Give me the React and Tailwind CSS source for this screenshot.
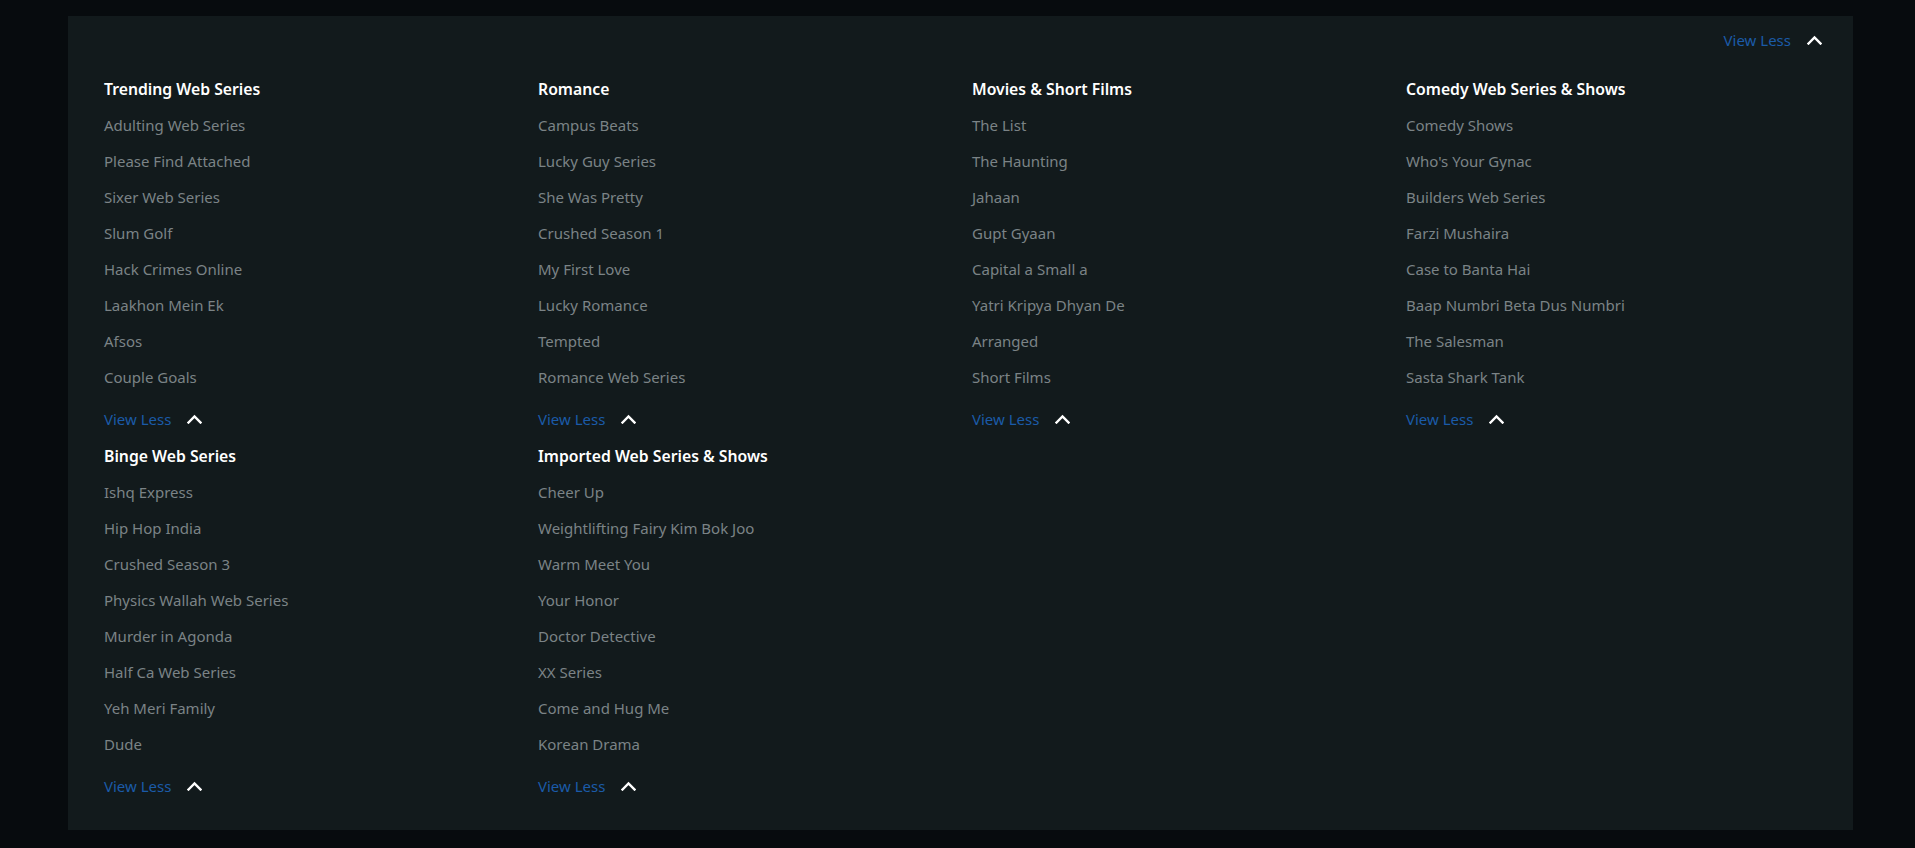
import React from "react";

const sections = [
  { title: "Trending Web Series", items: ["Adulting Web Series", "Please Find Attached", "Sixer Web Series", "Slum Golf", "Hack Crimes Online", "Laakhon Mein Ek", "Afsos", "Couple Goals"] },
  { title: "Romance", items: ["Campus Beats", "Lucky Guy Series", "She Was Pretty", "Crushed Season 1", "My First Love", "Lucky Romance", "Tempted", "Romance Web Series"] },
  { title: "Movies & Short Films", items: ["The List", "The Haunting", "Jahaan", "Gupt Gyaan", "Capital a Small a", "Yatri Kripya Dhyan De", "Arranged", "Short Films"] },
  { title: "Comedy Web Series & Shows", items: ["Comedy Shows", "Who's Your Gynac", "Builders Web Series", "Farzi Mushaira", "Case to Banta Hai", "Baap Numbri Beta Dus Numbri", "The Salesman", "Sasta Shark Tank"] },
  { title: "Binge Web Series", items: ["Ishq Express", "Hip Hop India", "Crushed Season 3", "Physics Wallah Web Series", "Murder in Agonda", "Half Ca Web Series", "Yeh Meri Family", "Dude"] },
  { title: "Imported Web Series & Shows", items: ["Cheer Up", "Weightlifting Fairy Kim Bok Joo", "Warm Meet You", "Your Honor", "Doctor Detective", "XX Series", "Come and Hug Me", "Korean Drama"] },
];

function Chevron() {
  return (
    <svg width="15" height="10" viewBox="0 0 15 10" fill="none">
      <polyline points="1.5,8.5 7.5,2.5 13.5,8.5" stroke="#ffffff" strokeWidth="2.4" strokeLinecap="square" />
    </svg>
  );
}

function ViewLess() {
  return (
    <button className="flex items-center gap-[16px] text-[15px] text-[#1b5ba8]">
      <span>View Less</span>
      <Chevron />
    </button>
  );
}

export default function App() {
  return (
    <div className="h-[848px] w-full overflow-hidden bg-[#070b0e] pt-[16px] pl-[68px]" style={{ fontFamily: '"Noto Sans", "Open Sans", sans-serif' }}>
      <div className="h-[814px] w-[1785px] bg-[#121a1c] pt-[6px] pl-[36px] pr-[31px]">
        <div className="flex h-[36px] items-center justify-end">
          <ViewLess />
        </div>
        <div className="mt-[14px] grid grid-cols-[repeat(4,434px)]">
          {sections.map((s) => (
            <div key={s.title} className="flex flex-col">
              <div className="flex h-[35px] items-center text-[15.75px] font-semibold text-white">{s.title}</div>
              {s.items.map((it) => (
                <a key={it} className="flex h-[36px] items-center text-[15px] text-[#7b8386]">{it}</a>
              ))}
              <div className="mt-[6px] mb-[2px] flex h-[36px] items-center">
                <ViewLess />
              </div>
            </div>
          ))}
        </div>
      </div>
    </div>
  );
}
